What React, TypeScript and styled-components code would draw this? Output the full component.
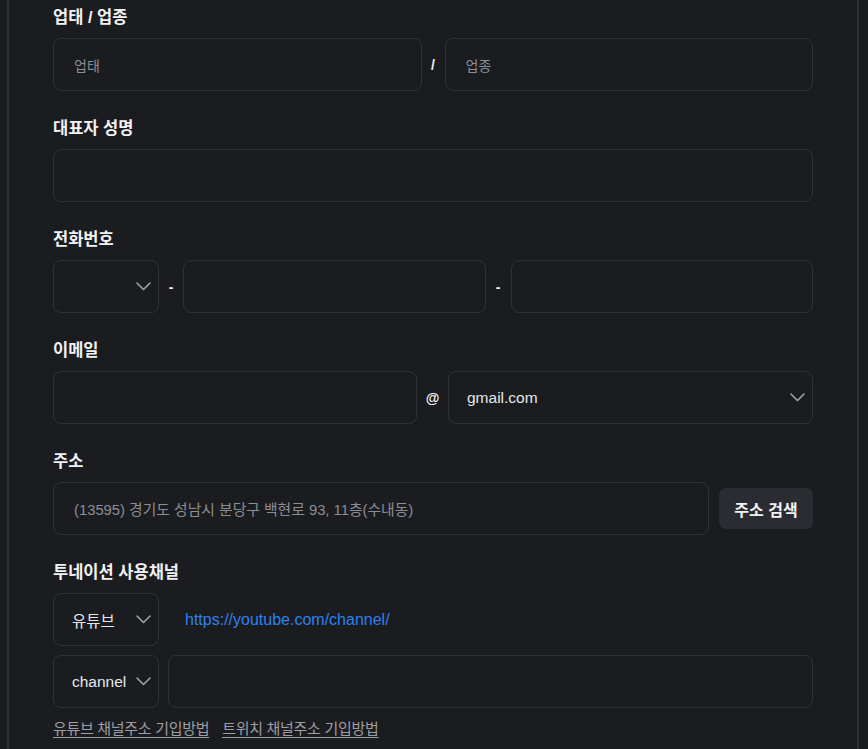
import React from "react";
import styled, { createGlobalStyle } from "styled-components";

const Colors = {
  page: "#1b1c20",
  frame: "#2d2f33",
  border: "#303237",
  label: "#f1f2f4",
  text: "#e6e7ea",
  placeholder: "#8b8e94",
  link: "#2f80ed",
  muted: "#9c9fa5",
  button: "#2a2c31",
};

const fontStack = `"Liberation Sans", "Noto Sans CJK KR", "Noto Sans", sans-serif`;

const GlobalStyle = createGlobalStyle`
  html, body {
    margin: 0;
    padding: 0;
    background: ${Colors.page};
  }
  body {
    font-family: ${fontStack};
    color: ${Colors.text};
  }
`;

const Chevron: React.FC = () => (
  <svg width="15" height="9" viewBox="0 0 15 9" fill="none">
    <path d="M1 1l6.5 6.5L14 1" stroke="#a3a6ab" strokeWidth="1.5" strokeLinecap="round" strokeLinejoin="round" />
  </svg>
);

interface SelectProps {
  value?: string;
  width?: number;
}

const SelectBox: React.FC<SelectProps> = ({ value, width }) => (
  <SelectWrap $width={width}>
    <SelectValue>{value}</SelectValue>
    <Chevron />
  </SelectWrap>
);

export default function App() {
  return (
    <>
      <GlobalStyle />
      <Frame>
        <Form>
          <Section>
            <Label>업태 / 업종</Label>
            <Row>
              <TextInput>
                <Placeholder>업태</Placeholder>
              </TextInput>
              <Separator $width={23}>/</Separator>
              <TextInput>
                <Placeholder>업종</Placeholder>
              </TextInput>
            </Row>
          </Section>

          <Section>
            <Label>대표자 성명</Label>
            <Row>
              <TextInput />
            </Row>
          </Section>

          <Section>
            <Label>전화번호</Label>
            <Row>
              <SelectBox width={106} />
              <Separator $width={24}>-</Separator>
              <TextInput />
              <Separator $width={25}>-</Separator>
              <TextInput />
            </Row>
          </Section>

          <Section>
            <Label>이메일</Label>
            <Row>
              <TextInput $basis={364} />
              <Separator $width={31}>@</Separator>
              <SelectBox value="gmail.com" />
            </Row>
          </Section>

          <Section>
            <Label>주소</Label>
            <Row>
              <TextInput>
                <Placeholder $size={14.8}>(13595) 경기도 성남시 분당구 백현로 93, 11층(수내동)</Placeholder>
              </TextInput>
              <SearchButton>주소 검색</SearchButton>
            </Row>
          </Section>

          <Section $last>
            <Label>투네이션 사용채널</Label>
            <Row>
              <SelectBox value="유튜브" width={106} />
              <ChannelUrl>https://youtube.com/channel/</ChannelUrl>
            </Row>
            <Row $top={9}>
              <SelectBox value="channel" width={106} />
              <Spacer />
              <TextInput />
            </Row>
            <HelpLinks>
              <HelpLink>유튜브 채널주소 기입방법</HelpLink>
              <HelpLink>트위치 채널주소 기입방법</HelpLink>
            </HelpLinks>
          </Section>
        </Form>
      </Frame>
    </>
  );
}

const Frame = styled.div`
  margin: 0 9px 0 7px;
  min-height: 749px;
  border-left: 2px solid ${Colors.frame};
  border-right: 2px solid ${Colors.frame};
  box-sizing: border-box;
`;

const Form = styled.div`
  padding: 6px 44px 0 44px;
  display: flex;
  flex-direction: column;
`;

const Section = styled.div<{ $last?: boolean }>`
  display: flex;
  flex-direction: column;
  margin-bottom: ${(p) => (p.$last ? 0 : 26)}px;
`;

const Label = styled.div`
  font-size: 16.5px;
  font-weight: 700;
  line-height: 22px;
  color: ${Colors.label};
  margin-bottom: 10px;
`;

const Row = styled.div<{ $top?: number }>`
  display: flex;
  align-items: center;
  height: 53px;
  margin-top: ${(p) => p.$top ?? 0}px;
`;

const TextInput = styled.div<{ $basis?: number }>`
  flex: ${(p) => (p.$basis ? `0 0 ${p.$basis}px` : "1 1 0")};
  height: 53px;
  box-sizing: border-box;
  border: 1px solid ${Colors.border};
  border-radius: 8px;
  display: flex;
  align-items: center;
  padding: 0 20px;
  min-width: 0;
`;

const Placeholder = styled.span<{ $size?: number }>`
  font-size: ${(p) => p.$size ?? 14}px;
  color: ${Colors.placeholder};
  white-space: nowrap;
`;

const Separator = styled.span<{ $width: number }>`
  flex: 0 0 ${(p) => p.$width}px;
  text-align: center;
  font-size: 14px;
  font-weight: 700;
  color: ${Colors.label};
`;

const SelectWrap = styled.div<{ $width?: number }>`
  flex: ${(p) => (p.$width ? `0 0 ${p.$width}px` : "1 1 0")};
  height: 53px;
  box-sizing: border-box;
  border: 1px solid ${Colors.border};
  border-radius: 8px;
  display: flex;
  align-items: center;
  justify-content: space-between;
  padding: 0 7px 0 18px;
  svg {
    flex: 0 0 auto;
  }
`;

const SelectValue = styled.span`
  font-size: 15.5px;
  color: ${Colors.text};
  white-space: nowrap;
`;

const SearchButton = styled.button`
  flex: 0 0 94px;
  margin-left: 10px;
  height: 41px;
  border: none;
  border-radius: 7px;
  background: ${Colors.button};
  color: ${Colors.label};
  font-family: inherit;
  font-size: 16px;
  font-weight: 700;
  padding: 0;
`;

const ChannelUrl = styled.span`
  margin-left: 26px;
  font-size: 16px;
  color: ${Colors.link};
`;

const Spacer = styled.div`
  flex: 0 0 9px;
`;

const HelpLinks = styled.div`
  display: flex;
  gap: 13px;
  margin-top: 9px;
`;

const HelpLink = styled.a`
  font-size: 15px;
  color: ${Colors.muted};
  text-decoration: underline;
  text-underline-offset: 3px;
  letter-spacing: -0.3px;
  cursor: pointer;
`;
